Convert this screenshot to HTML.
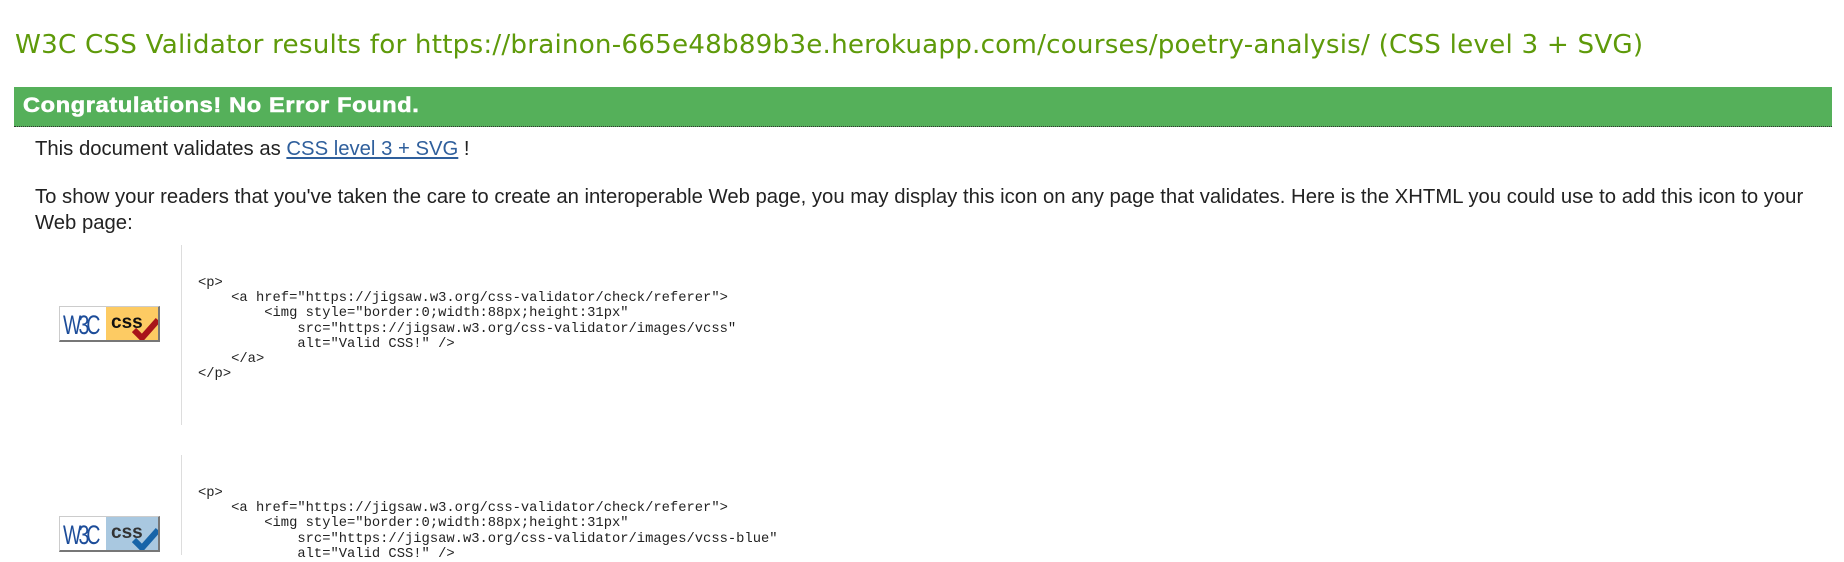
<!DOCTYPE html>
<html><head><meta charset="utf-8"><style>
body{margin:0;width:1844px;height:551px;overflow:hidden;background:#fff;position:relative;font-family:"Liberation Sans",Arial,sans-serif;color:#222}
.a{position:absolute;white-space:pre}
h1{position:absolute;left:15px;top:30px;margin:0;font-family:"DejaVu Sans",sans-serif;font-weight:normal;font-size:26.2px;color:#5e9a0a;white-space:nowrap;letter-spacing:0.2px}
.bar{position:absolute;left:14px;top:87px;width:1818px;height:39px;background:#55b05a;border-bottom:1px dotted #333}
.bar span{position:absolute;left:9px;top:7px;color:#fff;font-weight:bold;font-size:21px;letter-spacing:0.6px;-webkit-text-stroke:0.6px #fff;transform:scaleX(1.12);transform-origin:left}
.p{font-size:20.3px;color:#222}
a{color:#2f5f9c}
.vl{position:absolute;left:181px;width:1px;background:#ddd}
.code{position:absolute;left:198px;font-family:"Liberation Mono",monospace;font-size:13.8px;line-height:15.2px;color:#222;white-space:pre}
.icon{position:absolute;left:59px;width:101px;height:36px;border:1px solid #ccc;border-right:2px solid #777;border-bottom:2px solid #777;box-sizing:border-box;background:#fff;overflow:hidden}
.icon .r{position:absolute;left:46px;top:0;right:0;bottom:0}
.icon .w{position:absolute;left:3px;top:3px;font-family:"Liberation Sans",sans-serif;font-size:27px;color:#1d4d9a;letter-spacing:-4px;transform:scaleX(0.72);transform-origin:left}
.icon .c{position:absolute;left:51px;top:5px;font-weight:bold;font-size:19px;color:#111}
</style></head><body>
<h1>W3C CSS Validator results for https://brainon-665e48b89b3e.herokuapp.com/courses/poetry-analysis/ (CSS level 3 + SVG)</h1>
<div class="bar"><span>Congratulations! No Error Found.</span></div>
<div class="a p" style="left:35px;top:138px">This document validates as <a href="#">CSS level 3 + SVG</a> !</div>
<div class="a p" style="left:35px;top:184px;line-height:26px;white-space:normal;width:1790px">To show your readers that you've taken the care to create an interoperable Web page, you may display this icon on any page that validates. Here is the XHTML you could use to add this icon to your Web page:</div>
<div class="vl" style="top:245px;height:180px"></div>
<div class="vl" style="top:455px;height:100px"></div>
<div class="icon" style="top:306px"><div class="r" style="background:#fdcb63"></div><div class="w">W3C</div><div class="c">css</div>
<svg style="position:absolute;left:72px;top:9px" width="28" height="26" viewBox="0 0 28 26"><path d="M2 14 L10 22 L26 4" stroke="#a8141a" stroke-width="6" fill="none"/></svg></div>
<div class="icon" style="top:516px"><div class="r" style="background:#a9c8e0"></div><div class="w">W3C</div><div class="c" style="color:#333">css</div>
<svg style="position:absolute;left:72px;top:9px" width="28" height="26" viewBox="0 0 28 26"><path d="M2 14 L10 22 L26 4" stroke="#1764a8" stroke-width="6" fill="none"/></svg></div>
<div class="code" style="top:276px">&lt;p&gt;
    &lt;a href="https://jigsaw.w3.org/css-validator/check/referer"&gt;
        &lt;img style="border:0;width:88px;height:31px"
            src="https://jigsaw.w3.org/css-validator/images/vcss"
            alt="Valid CSS!" /&gt;
    &lt;/a&gt;
&lt;/p&gt;</div>
<div class="code" style="top:486px">&lt;p&gt;
    &lt;a href="https://jigsaw.w3.org/css-validator/check/referer"&gt;
        &lt;img style="border:0;width:88px;height:31px"
            src="https://jigsaw.w3.org/css-validator/images/vcss-blue"
            alt="Valid CSS!" /&gt;</div>
</body></html>
